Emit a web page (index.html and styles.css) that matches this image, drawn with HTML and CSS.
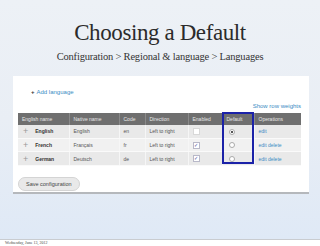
FILE: index.html
```html
<!DOCTYPE html>
<html>
<head>
<meta charset="utf-8">
<link rel="stylesheet" href="styles.css">
</head>
<body>
<div class="slide">
  <h1 class="title">Choosing a Default</h1>
  <div class="subtitle">Configuration &gt; Regional &amp; language &gt; Languages</div>
  <div class="panel">
    <div class="add"><span class="plus">+</span><span class="link">Add language</span></div>
    <div class="weights"><span class="link">Show row weights</span></div>
    <div class="tablewrap">
      <table class="tbl">
        <colgroup>
          <col class="c1"><col class="c2"><col class="c3"><col class="c4"><col class="c5"><col class="c6"><col class="c7">
        </colgroup>
        <thead>
          <tr><th>English name</th><th>Native name</th><th>Code</th><th>Direction</th><th>Enabled</th><th>Default</th><th>Operations</th></tr>
        </thead>
        <tbody>
          <tr class="odd"><td><span class="drag">+</span><b>English</b></td><td>English</td><td>en</td><td>Left to right</td><td><span class="cb dis"></span></td><td><span class="radio on"></span></td><td><span class="link">edit</span></td></tr>
          <tr class="even"><td><span class="drag">+</span><b>French</b></td><td>Français</td><td>fr</td><td>Left to right</td><td><span class="cb">✓</span></td><td><span class="radio"></span></td><td><span class="link">edit delete</span></td></tr>
          <tr class="odd"><td><span class="drag">+</span><b>German</b></td><td>Deutsch</td><td>de</td><td>Left to right</td><td><span class="cb">✓</span></td><td><span class="radio"></span></td><td><span class="link">edit delete</span></td></tr>
        </tbody>
      </table>
      <div class="highlight"></div>
    </div>
    <div class="btn">Save configuration</div>
  </div>
</div>
<div class="footer">Wednesday, June 13, 2012</div>
</body>
</html>
```
FILE: styles.css
```css
html, body { margin: 0; padding: 0; }
body { width: 320px; height: 246px; overflow: hidden; background: #fff; font-family: "Liberation Sans", Arial, sans-serif; }
.slide {
  height: 239px;
  border-bottom: 1px solid #c9ccd0;
  background: linear-gradient(180deg, #edf1f6 0%, #e9eef5 50%, #dfe9f6 100%);
  display: flex; flex-direction: column; align-items: center;
  overflow: hidden;
}
.title {
  margin: 21px 0 0; font-family: "Liberation Serif", "Times New Roman", serif;
  font-weight: normal; font-size: 23px; line-height: 24px; letter-spacing: -0.4px; color: #2b2b2b;
}
.subtitle {
  margin-top: 5px; font-family: "Liberation Serif", "Times New Roman", serif;
  font-size: 10.5px; line-height: 13px; letter-spacing: -0.2px; color: #333;
}
.panel {
  align-self: flex-start;
  margin: 13px 0 0 13px; width: 296px; height: 116px;
  background: #fff; box-shadow: 0 2px 0 #b5b8bc;
  box-sizing: border-box; padding: 12px 8px 0 5px;
  position: relative;
}
.add { margin-left: 13px; font-size: 6px; line-height: 8px; height: 8px; }
.plus { color: #333; font-weight: bold; margin-right: 2px; }
.link { color: #3a8cc4; }
.weights { text-align: right; font-size: 6px; line-height: 8px; height: 8px; margin-top: 6px; }
.tablewrap { position: relative; margin-top: 3px; }
.tbl { border-collapse: collapse; width: 283px; table-layout: fixed; font-size: 5px; color: #555; }
.c1 { width: 51px; } .c2 { width: 50px; } .c3 { width: 26px; } .c4 { width: 43px; }
.c5 { width: 34px; } .c6 { width: 32px; } .c7 { width: 47px; }
.tbl th {
  background: #6f6f6f; color: #e8e8e8; font-weight: normal; text-align: left;
  height: 12px; padding: 0 0 0 4px; border-left: 1px solid #8a8a8a;
}
.tbl th:first-child { border-left: none; }
.tbl td { height: 12.7px; padding: 0 0 0 4px; border-left: 1px solid #f6f6f6; border-bottom: 1px solid #fafafa; white-space: nowrap; }
.tbl td:first-child { border-left: none; }
.odd td { background: #e9e9e9; }
.even td { background: #f1f1f1; }
.drag { color: #999; font-size: 9px; font-weight: normal; margin: 0 7px 0 1px; vertical-align: -1px; }
.tbl b { color: #333; }
.cb { display: inline-block; width: 5px; height: 5px; border: 1px solid #b8b8c8; background: #fff; font-size: 5px; line-height: 5px; color: #4a4a9a; text-align: center; vertical-align: middle; }
.cb.dis { border-color: #d8d8d8; }
.radio { display: inline-block; width: 4px; height: 4px; border: 1px solid #aaa; border-radius: 50%; background: #fff; vertical-align: middle; margin-left: 2px; }
.radio.on { background: radial-gradient(circle, #555 45%, #fff 55%); }
.highlight { position: absolute; left: 204px; top: -1px; width: 32px; height: 52px; border: 2px solid #1b22a8; box-sizing: border-box; }
.btn {
  display: inline-block; margin-top: 11px; height: 12px; line-height: 12px;
  padding: 0 7px; border-radius: 7px; background: #e9e9e9; border: 1px solid #d4d4d4;
  font-size: 5.5px; color: #444;
}
.footer { font-family: "Liberation Serif", serif; font-size: 4px; line-height: 6px; padding-left: 5px; color: #444; }
```
